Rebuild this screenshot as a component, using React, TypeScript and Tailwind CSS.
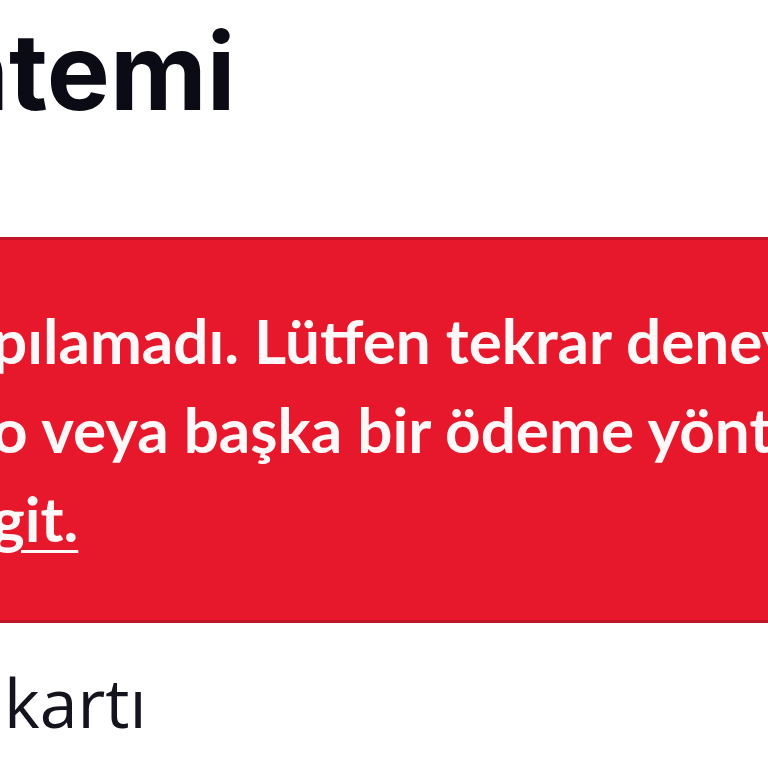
import React from "react";

const lines = ["pılamadı. Lütfen tekrar deneyin", "o veya başka bir ödeme yöntemi", "git."];

export default function App() {
  return (
    <div className="w-[768px] h-[768px] overflow-hidden bg-white font-['Lato',sans-serif]">
      <h1 className="pt-[19px] -ml-[57px] whitespace-nowrap font-['Inter',sans-serif] text-[106px] font-bold leading-none text-[#0b0b16]">
        ntemi
      </h1>
      <div className="mt-[112px] border-y-[3px] border-[#c01628] bg-[#e8182c] pt-[56px] pb-[57px] text-[62px] font-bold leading-[89px] text-[#fff8f8]">
        {lines.map((line, i) => (
          <p key={i} className="-ml-[8px] whitespace-nowrap">
            {i === 2 ? <a className="underline underline-offset-[8px] decoration-[3px]">{line}</a> : line}
          </p>
        ))}
      </div>
      <p className="mt-[45px] ml-[4px] whitespace-nowrap font-['Open_Sans',sans-serif] text-[68px] leading-none text-[#14141f]">
        kartı
      </p>
    </div>
  );
}
